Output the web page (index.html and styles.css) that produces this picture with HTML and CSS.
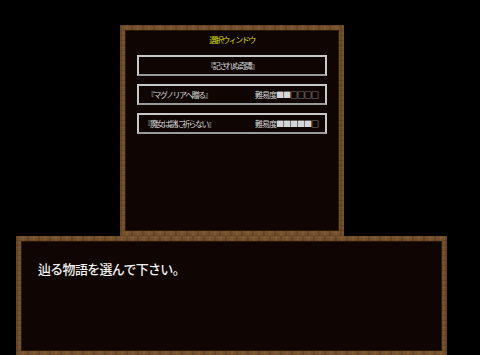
FILE: index.html
```html
<!DOCTYPE html>
<html lang="ja">
<head>
<meta charset="utf-8">
<link rel="stylesheet" href="styles.css">
</head>
<body>
  <div class="win win-select">
    <div class="win-inner select-inner">
      <div class="title">選択ウィンドウ</div>
      <div class="choice choice-center">『記されぬ奇譚』</div>
      <div class="choice choice-split">
        <span class="c-name">『マグノリアへ贈る』</span>
        <span class="c-diff">難易度■■□□□□</span>
      </div>
      <div class="choice choice-split">
        <span class="c-name">『魔女は謎に祈らない』</span>
        <span class="c-diff">難易度■■■■■□</span>
      </div>
    </div>
  </div>
  <div class="win win-msg">
    <div class="win-inner msg-inner">
      <p class="msg">辿る物語を選んで下さい。</p>
    </div>
  </div>
</body>
</html>
```
FILE: styles.css
```css
html, body {
  margin: 0;
  padding: 0;
  background: #000;
  width: 480px;
  height: 355px;
  overflow: hidden;
  font-family: "Noto Sans CJK JP", "DejaVu Sans", sans-serif;
}

.win {
  box-sizing: border-box;
  padding: 5px;
  background-color: #73502d;
  background-image:
    repeating-linear-gradient(90deg, rgba(50,30,12,0.22) 0 2px, transparent 2px 6px, rgba(160,120,75,0.18) 6px 8px, transparent 8px 11px),
    repeating-linear-gradient(0deg, rgba(50,30,12,0.18) 0 1px, transparent 1px 3px, rgba(150,110,65,0.14) 3px 4px, transparent 4px 5px);
}

.win-inner {
  box-sizing: border-box;
  height: 100%;
  background: #0f0604;
  box-shadow: inset 0 0 0 1px #2a1a0c;
}

.win-select {
  margin: 25px 0 0 120px;
  width: 224px;
  height: 211px;
}

.select-inner {
  display: flex;
  flex-direction: column;
  align-items: center;
  padding-top: 3px;
  gap: 8px;
}

.title {
  color: #dcdc10;
  font-size: 8px;
  letter-spacing: -1.5px;
  line-height: 14px;
  height: 14px;
}

.choice {
  box-sizing: border-box;
  width: 190px;
  height: 21px;
  border: 2px solid #c8c8c8;
  border-bottom-color: #9a9a9a;
  color: #d6d6d6;
  font-size: 8px;
  letter-spacing: -1.6px;
  display: flex;
  align-items: center;
}

.choice-center {
  justify-content: center;
}

.choice-split {
  justify-content: space-between;
  padding-right: 7px;
}

.c-name {
  width: 80px;
  white-space: nowrap;
  display: flex;
  justify-content: center;
}

.c-diff {
  white-space: nowrap;
  letter-spacing: -1px;
}

.win-msg {
  margin: 0 0 0 16px;
  width: 431px;
  height: 120px;
}

.msg-inner {
  padding: 20px 0 0 17px;
}

.msg {
  margin: 0;
  color: #f2f2f2;
  font-size: 13px;
  letter-spacing: -0.7px;
  line-height: 16px;
  font-weight: 500;
}
```
